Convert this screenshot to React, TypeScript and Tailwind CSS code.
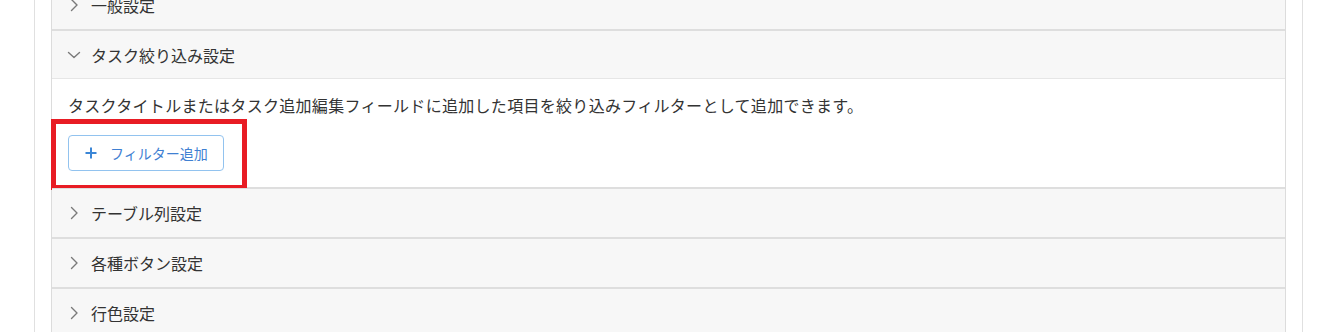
import * as React from 'react';

type Section = { title: string; open?: boolean };

const sections: Section[] = [
  { title: '一般設定' },
  { title: 'タスク絞り込み設定', open: true },
  { title: 'テーブル列設定' },
  { title: '各種ボタン設定' },
  { title: '行色設定' },
];

function Chevron({ open }: { open?: boolean }) {
  return (
    <svg width="16" height="16" viewBox="0 0 16 16" fill="none" className="shrink-0">
      {open ? (
        <path d="M2.5 5.5L8 10.5L13.5 5.5" stroke="#7a7a7a" strokeWidth="1.4" strokeLinecap="round" strokeLinejoin="round" />
      ) : (
        <path d="M5.5 2.5L11 8L5.5 13.5" stroke="#7a7a7a" strokeWidth="1.4" strokeLinecap="round" strokeLinejoin="round" />
      )}
    </svg>
  );
}

function PlusIcon() {
  return (
    <svg width="12" height="12" viewBox="0 0 12 12" fill="none" className="shrink-0">
      <path d="M6 0.5V11.5M0.5 6H11.5" stroke="#3b86d6" strokeWidth="2" />
    </svg>
  );
}

export default function App() {
  return (
    <div
      className="min-h-screen overflow-hidden bg-white text-[#333333]"
      style={{ fontFamily: '"Noto Sans CJK JP", "Noto Sans", sans-serif' }}
    >
      <div className="ml-[34px] mr-[14px] mt-[-37px] border border-[#e0e0e0] p-4">
        <div className="border-x border-[#dcdcdc]">
          {sections.map((s) => (
            <div key={s.title} className="relative border-y border-[#dedede]">
              <div
                className={`flex h-[48px] items-center gap-[9px] bg-[#f7f7f7] pl-[14px] text-[16px] ${
                  s.open ? 'border-b border-[#e6e6e6]' : ''
                }`}
              >
                <Chevron open={s.open} />
                <span>{s.title}</span>
              </div>

              {s.open && (
                <div className="relative bg-white pb-4 pl-4 pt-[14px]">
                  <p className="text-[16px] leading-6 tracking-[0.3px]">
                    タスクタイトルまたはタスク追加編集フィールドに追加した項目を絞り込みフィルターとして追加できます。
                  </p>
                  <button
                    type="button"
                    className="mt-[18px] flex h-[36px] w-[156px] items-center gap-[13px] rounded-[4px] border border-[#92c3ef] bg-white pl-4 text-[14px] text-[#3f80d2]"
                  >
                    <PlusIcon />
                    フィルター追加
                  </button>

                  {/* annotation box */}
                  <div className="pointer-events-none absolute left-[-1px] top-[40px] h-[71px] w-[196px] border-[5px] border-[#e81c24]" />
                </div>
              )}
            </div>
          ))}
        </div>
      </div>
    </div>
  );
}
